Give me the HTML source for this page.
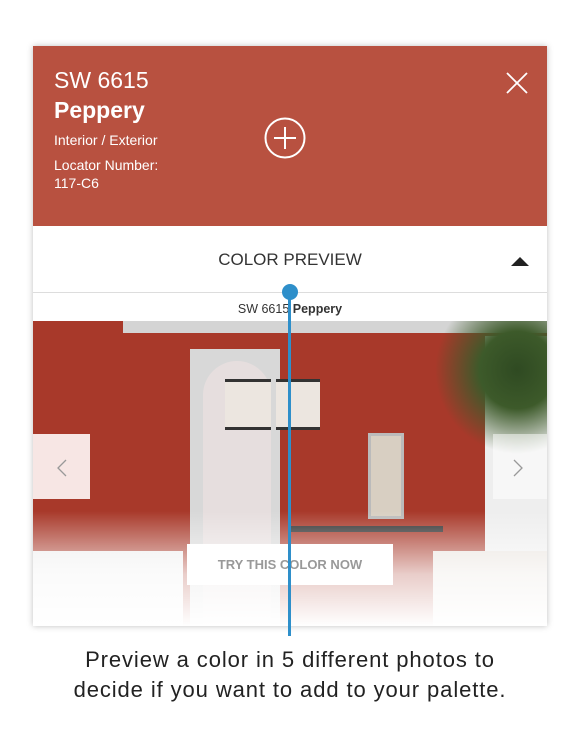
<!DOCTYPE html>
<html><head><style>
body{margin:0;width:580px;height:734px;background:#fff;position:relative;overflow:hidden;font-family:"Liberation Sans",sans-serif}
.card{position:absolute;left:33px;top:46px;width:514px;height:580px;box-shadow:0 0 6px rgba(0,0,0,.25);background:#fff;overflow:hidden}
.hdr{position:absolute;left:0;top:0;width:514px;height:180px;background:#b85140;color:#fff}
.a{position:absolute}
.photo{position:absolute;left:0;top:275px;width:514px;height:305px;background:#a8392a;overflow:hidden}
.fade{position:absolute;left:0;top:190px;width:514px;height:115px;background:linear-gradient(rgba(255,255,255,0),rgba(255,255,255,.75) 55%,#fff)}
</style></head><body>
<div class="card">
 <div class="hdr">
  <div class="a" style="left:21px;top:21px;font-size:23px">SW 6615</div>
  <div class="a" style="left:21px;top:51px;font-size:23px;font-weight:bold">Peppery</div>
  <div class="a" style="left:21px;top:86px;font-size:14px">Interior / Exterior</div>
  <div class="a" style="left:21px;top:110px;font-size:14px;line-height:18px">Locator Number:<br>117-C6</div>
  <svg class="a" style="left:230px;top:70px" width="44" height="44"><circle cx="22" cy="22" r="19.5" fill="none" stroke="#fff" stroke-width="2"/><path d="M22 11V33M11 22H33" stroke="#fff" stroke-width="2"/></svg>
  <svg class="a" style="left:473px;top:26px" width="22" height="22"><path d="M1 1L21 21M21 1L1 21" stroke="#fff" stroke-width="1.8"/></svg>
 </div>
 <div class="a" style="left:0;top:180px;width:514px;height:66px;border-bottom:1px solid #ddd"></div>
 <div class="a" style="left:0;top:204px;width:514px;text-align:center;font-size:17px;color:#333">COLOR PREVIEW</div>
 <svg class="a" style="left:478px;top:210px" width="18" height="10"><path d="M0 10L9 1L18 10Z" fill="#222"/></svg>
 <div class="a" style="left:0;top:256px;width:514px;text-align:center;font-size:12.5px;color:#333">SW 6615 <b>Peppery</b></div>
 <div class="photo">
  <div class="a" style="left:90px;top:0;width:424px;height:12px;background:#d4d4d4"></div>
  <div class="a" style="left:157px;top:28px;width:90px;height:277px;background:#d8d8d8"></div>
  <div class="a" style="left:170px;top:40px;width:68px;height:270px;background:#e6dede;border-radius:34px 34px 0 0"></div>
  <div class="a" style="left:192px;top:58px;width:46px;height:45px;background:#ece6e0;border-top:3px solid #333;border-bottom:3px solid #333"></div>
  <div class="a" style="left:243px;top:58px;width:44px;height:45px;background:#ece6e0;border-top:3px solid #333;border-bottom:3px solid #333"></div>
  <div class="a" style="left:335px;top:112px;width:30px;height:80px;background:#d8cfc2;border:3px solid #bbb"></div>
  <div class="a" style="left:255px;top:205px;width:155px;height:6px;background:#333"></div>
  <div class="a" style="left:452px;top:15px;width:62px;height:290px;background:#eee"></div>
  <div class="a" style="left:395px;top:0;width:119px;height:140px;background:radial-gradient(ellipse at 75% 35%,#2f4a22 0,#3d5a2a 30%,rgba(0,0,0,0) 65%)"></div>
  <div class="a" style="left:0;top:230px;width:150px;height:75px;background:#eee"></div>
  <div class="a" style="left:400px;top:230px;width:114px;height:75px;background:#e8e2dc"></div>
  <div class="fade"></div>
  <div class="a" style="left:0;top:113px;width:57px;height:65px;background:#f7e6e4"></div>
  <svg class="a" style="left:24px;top:138px" width="10" height="18"><path d="M9 1L1 9L9 17" fill="none" stroke="#999" stroke-width="1.3"/></svg>
  <div class="a" style="left:460px;top:113px;width:54px;height:65px;background:rgba(255,255,255,.5)"></div>
  <svg class="a" style="left:480px;top:138px" width="10" height="18"><path d="M1 1L9 9L1 17" fill="none" stroke="#999" stroke-width="1.3"/></svg>
  <div class="a" style="left:154px;top:223px;width:206px;height:41px;background:#fff;text-align:center;line-height:41px;font-size:13px;font-weight:bold;color:#999">TRY THIS COLOR NOW</div>
 </div>
</div>
<div class="a" style="left:288px;top:292px;width:3px;height:344px;background:#2e8fca"></div>
<div class="a" style="left:282px;top:284px;width:16px;height:16px;border-radius:50%;background:#2e8fca"></div>
<div class="a" style="left:0;top:645px;width:580px;text-align:center;font-size:22px;letter-spacing:0.9px;line-height:30px;color:#222">Preview a color in 5 different photos to<br>decide if you want to add to your palette.</div>
</body></html>
